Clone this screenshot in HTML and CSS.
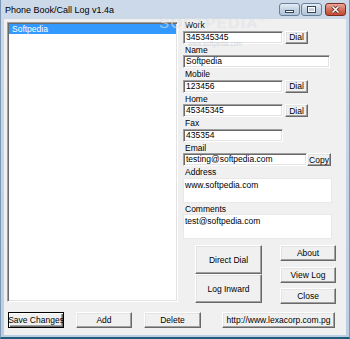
FILE: index.html
```html
<!DOCTYPE html>
<html lang="en">
<head>
  <meta charset="UTF-8">
  <title>Phone Book/Call Log v1.4a</title>
  <link rel="stylesheet" href="styles.css">
</head>
<body>
  <div class="window">
    <div class="titlebar">
      <span class="title">Phone Book/Call Log v1.4a</span>
      <div class="caption">
        <span class="cap-btn">
          <svg width="19" height="11" viewBox="0 0 19 11"><rect x="5.5" y="6.5" width="8" height="2" fill="#fff" stroke="#34465e"/></svg>
        </span>
        <span class="cap-btn">
          <svg width="19" height="11" viewBox="0 0 19 11"><rect x="5.5" y="2.5" width="8" height="6" fill="none" stroke="#34465e"/><rect x="6.5" y="3.5" width="6" height="4" fill="none" stroke="#fff"/></svg>
        </span>
        <span class="cap-btn close">
          <svg width="19" height="11" viewBox="0 0 19 11"><path d="M6.5 2.5l6 6M12.5 2.5l-6 6" stroke="#5a1a10" stroke-width="3"/><path d="M6.5 2.5l6 6M12.5 2.5l-6 6" stroke="#fff" stroke-width="1.6"/></svg>
        </span>
      </div>
    </div>

    <div class="client">
      <div class="listbox">
        <div class="item selected">Softpedia</div>
      </div>

      <div class="fields">
        <div class="label">Work</div>
        <div class="row">
          <div class="edit short">345345345</div>
          <button class="btn dial">Dial</button>
        </div>
        <div class="label">Name</div>
        <div class="edit full">Softpedia</div>
        <div class="label">Mobile</div>
        <div class="row">
          <div class="edit short">123456</div>
          <button class="btn dial">Dial</button>
        </div>
        <div class="label">Home</div>
        <div class="row">
          <div class="edit short">45345345</div>
          <button class="btn dial">Dial</button>
        </div>
        <div class="label">Fax</div>
        <div class="edit short">435354</div>
        <div class="label">Email</div>
        <div class="row tight">
          <div class="edit email">testing@softpedia.com</div>
          <button class="btn copy">Copy</button>
        </div>
        <div class="label">Address</div>
        <div class="memo">www.softpedia.com</div>
        <div class="label">Comments</div>
        <div class="memo">test@softpedia.com</div>

        <div class="actions">
          <div class="big-col">
            <button class="btn">Direct Dial</button>
            <button class="btn">Log Inward</button>
          </div>
          <div class="small-col">
            <button class="btn">About</button>
            <button class="btn">View Log</button>
            <button class="btn">Close</button>
          </div>
        </div>
      </div>

      <div class="bottom">
        <button class="btn default">Save Changes</button>
        <button class="btn">Add</button>
        <button class="btn delete">Delete</button>
        <button class="btn url">http://www.lexacorp.com.pg</button>
      </div>
    </div>

    <div class="watermark">SOFTPEDIA<sup>™</sup></div>
    <div class="watermark-url">www.softpedia.com</div>
  </div>
</body>
</html>
```

FILE: styles.css
```css
body { margin: 0; font-family: "Liberation Sans", Arial, sans-serif; }

.window { position: relative; width: 350px; height: 339px; box-sizing: border-box; display: flex; flex-direction: column; background: linear-gradient(#ccd9e9, #bccee2); border-left: 1px solid #7d98b6; border-right: 1px solid #7d98b6; border-bottom: 2px solid #1f5c7c; }

.titlebar { height: 19px; display: flex; align-items: center; padding-left: 4px; flex: none; }
.title { font-size: 9px; color: #000; }
.caption { margin-left: auto; margin-right: 3px; align-self: flex-start; margin-top: 3px; display: flex; gap: 1px; }
.cap-btn { width: 19px; height: 11px; border: 1px solid #6a7f99; border-radius: 3px; background: linear-gradient(#e6eef7, #c3d2e3 50%, #b4c6da); display: block; }
.cap-btn svg { display: block; }
.cap-btn.close { margin-left: 2px; border-color: #7a2c20; background: linear-gradient(#e9a99c, #d2705c 50%, #c14a33); }

.client { flex: 1; margin: 0 3px 2px 3px; background: #f0f0f0; display: grid; grid-template-columns: 171px 1fr; grid-template-rows: auto auto; column-gap: 5px; align-content: start; padding-left: 3px; font-size: 8.5px; }

.listbox { margin-top: 3px; height: 280px; box-sizing: border-box; background: #fff; border: 1px solid; border-color: #a0a0a0 #fff #fff #a0a0a0; box-shadow: inset 1px 1px #696969, inset -1px -1px #e3e3e3; padding: 1px; }
.item { height: 10px; line-height: 10px; padding-left: 3px; white-space: nowrap; }
.item.selected { background: #3399ff; color: #fff; }

.fields { display: flex; flex-direction: column; }
.label { height: 11.5px; line-height: 12px; padding-left: 2px; color: #000; }
.row { display: flex; gap: 2px; }
.row.tight { gap: 0; }

.edit { height: 13px; box-sizing: border-box; background: #fff; border: 1px solid; border-color: #a0a0a0 #fff #fff #a0a0a0; box-shadow: inset 1px 1px #696969, inset -1px -1px #e3e3e3; padding: 0 2px; line-height: 11px; white-space: nowrap; overflow: hidden; }
.short { width: 100px; }
.full { width: 147px; }
.email { width: 124px; }
.memo { width: 149px; height: 25px; box-sizing: border-box; background: #fff; border: 1px solid #e8e8e8; padding: 1px 1px 0; line-height: 10px; }

.btn { font-family: inherit; font-size: 8.5px; color: #000; background: #f0f0f0; padding: 0; margin: 0; box-sizing: border-box; border: 1px solid; border-color: #fff #696969 #696969 #fff; box-shadow: inset -1px -1px #a0a0a0, inset 1px 1px #e3e3e3; white-space: nowrap; overflow: visible; display: flex; align-items: center; justify-content: center; }
.dial { width: 23px; height: 13px; }
.copy { width: 24px; height: 13px; }

.actions { display: flex; gap: 18px; margin-top: 6px; margin-left: 12px; }
.big-col { display: flex; flex-direction: column; width: 67px; }
.big-col .btn { height: 29px; }
.small-col { display: flex; flex-direction: column; gap: 5.5px; width: 56px; }
.small-col .btn { height: 16px; }

.bottom { grid-column: 1 / -1; display: flex; gap: 12px; margin-top: 8px; padding-left: 1px; }
.bottom .btn { width: 56px; height: 16px; }
.bottom .delete { width: 57px; }
.bottom .url { width: 113px; margin-left: 9px; }
.bottom .default { border-color: #000; box-shadow: inset 1px 1px #fff, inset -1px -1px #696969, inset -2px -2px #a0a0a0; }

/* faint site watermark over the window */
.watermark { position: absolute; left: 158px; top: 14px; font-size: 15px; letter-spacing: 1.6px; color: rgba(255, 255, 255, 0.45); text-shadow: 0 0 1px rgba(150, 155, 165, 0.35); pointer-events: none; }
.watermark sup { font-size: 6px; letter-spacing: 0; }
.watermark-url { position: absolute; left: 187px; top: 40px; font-size: 6.3px; color: rgba(165, 170, 180, 0.45); pointer-events: none; }
```
